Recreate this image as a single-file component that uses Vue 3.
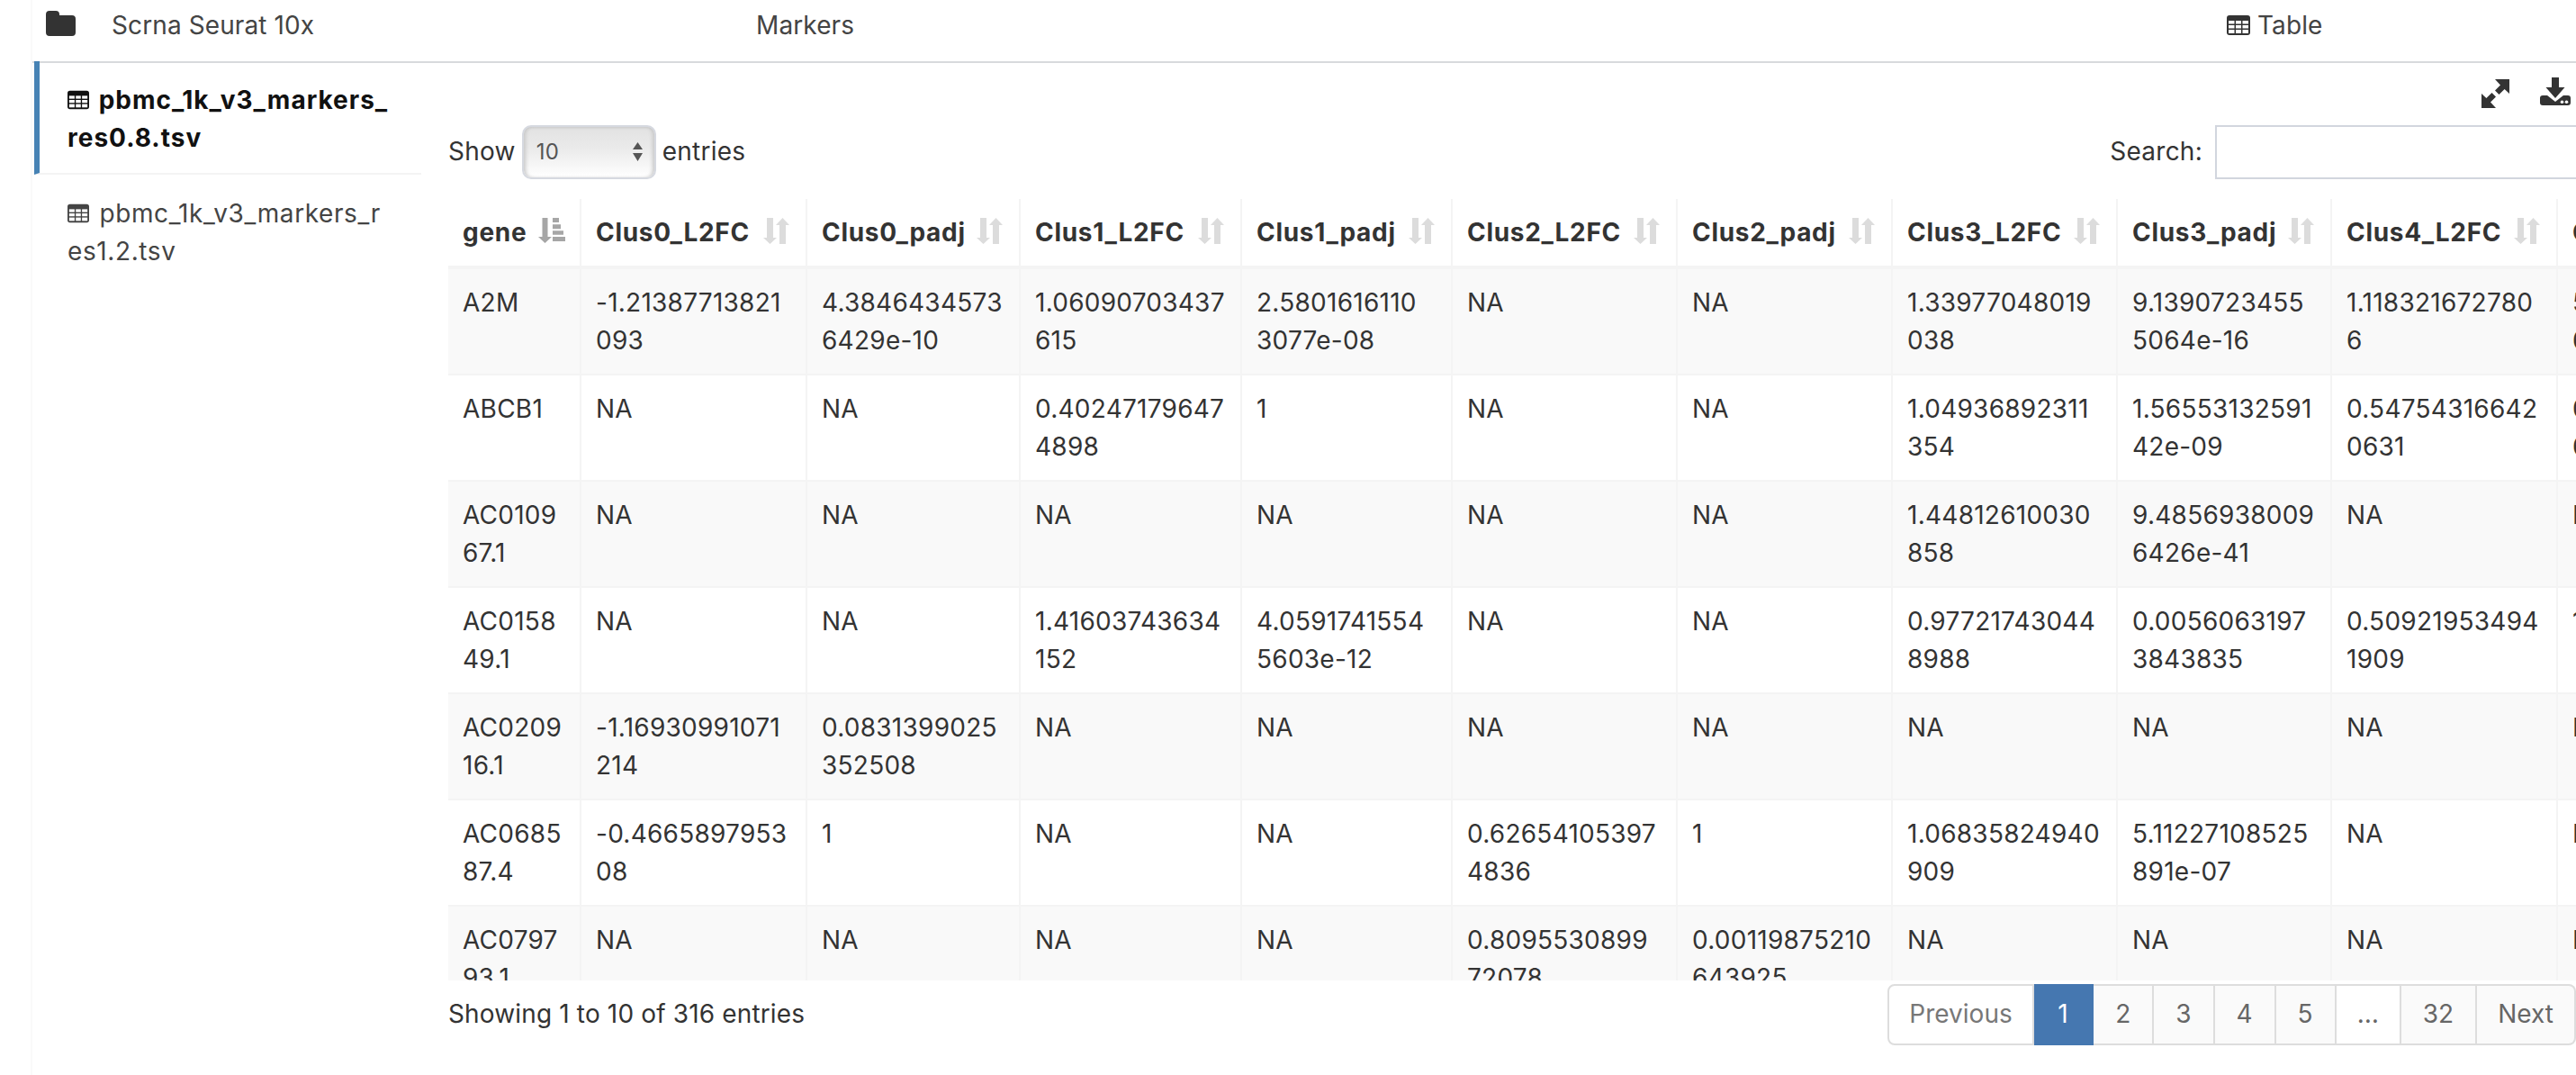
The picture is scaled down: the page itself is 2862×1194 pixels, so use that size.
<script setup>
const headers = ['gene','Clus0_L2FC','Clus0_padj','Clus1_L2FC','Clus1_padj','Clus2_L2FC','Clus2_padj','Clus3_L2FC','Clus3_padj','Clus4_L2FC','Clus4_padj']
const widths = [146,251,237,246,234,250,239,250,238,251,240]
const rows = [
  ['A2M','-1.21387713821093','4.38464345736429e-10','1.06090703437615','2.58016161103077e-08','NA','NA','1.33977048019038','9.13907234555064e-16','1.1183216727806','5.21387713866604'],
  ['ABCB1','NA','NA','0.402471796474898','1','NA','NA','1.04936892311354','1.5655313259142e-09','0.547543166420631','0.01377138211163'],
  ['AC010967.1','NA','NA','NA','NA','NA','NA','1.44812610030858','9.48569380096426e-41','NA','NA'],
  ['AC015849.1','NA','NA','1.41603743634152','4.05917415545603e-12','NA','NA','0.977217430448988','0.00560631973843835','0.509219534941909','1'],
  ['AC020916.1','-1.16930991071214','0.0831399025352508','NA','NA','NA','NA','NA','NA','NA','NA'],
  ['AC068587.4','-0.466589795308','1','NA','NA','0.626541053974836','1','1.06835824940909','5.11227108525891e-07','NA','NA'],
  ['AC079793.1','NA','NA','NA','NA','0.809553089972078','0.00119875210643925','NA','NA','NA','NA'],
]
const pages = [
  { t: 'Previous', c: 'muted' }, { t: '1', c: 'active' }, { t: '2', c: 'tint' }, { t: '3', c: 'tint' },
  { t: '4', c: 'tint' }, { t: '5', c: 'tint' }, { t: '…', c: 'gap' }, { t: '32', c: 'tint' }, { t: 'Next', c: 'tint last' },
]
</script>

<template>
  <div class="page">
    <nav class="nav">
      <div class="nav-item">
        <svg class="folder" viewBox="0 0 33 28"><path d="M4 0h7q4 0 4 4v1h14q4 0 4 4v15q0 4-4 4H4q-4 0-4-4V4q0-4 4-4z" fill="#333"/></svg>
        <span>Scrna Seurat 10x</span>
      </div>
      <div class="nav-item"><span>Markers</span></div>
      <div class="nav-item nav-table">
        <svg class="nav-ic" viewBox="0 0 26 22">
          <rect width="26" height="22" rx="3" fill="#333"/>
          <g fill="#fff">
            <rect x="2" y="6" width="6.5" height="3.5"/><rect x="10" y="6" width="6" height="3.5"/><rect x="17.5" y="6" width="6.5" height="3.5"/>
            <rect x="2" y="11" width="6.5" height="3.5"/><rect x="10" y="11" width="6" height="3.5"/><rect x="17.5" y="11" width="6.5" height="3.5"/>
            <rect x="2" y="16" width="6.5" height="4"/><rect x="10" y="16" width="6" height="4"/><rect x="17.5" y="16" width="6.5" height="4"/>
          </g>
        </svg>
        <span>Table</span>
      </div>
    </nav>

    <div class="body">
      <aside class="side">
        <a class="file on">
          <svg class="tbl" viewBox="0 0 26 22">
            <rect width="26" height="22" rx="3" fill="#111"/>
            <g fill="#fff">
              <rect x="2" y="6" width="6.5" height="3.5"/><rect x="10" y="6" width="6" height="3.5"/><rect x="17.5" y="6" width="6.5" height="3.5"/>
              <rect x="2" y="11" width="6.5" height="3.5"/><rect x="10" y="11" width="6" height="3.5"/><rect x="17.5" y="11" width="6.5" height="3.5"/>
              <rect x="2" y="16" width="6.5" height="4"/><rect x="10" y="16" width="6" height="4"/><rect x="17.5" y="16" width="6.5" height="4"/>
            </g>
          </svg>
          pbmc_1k_v3_markers_res0.8.tsv
        </a>
        <a class="file">
          <svg class="tbl" viewBox="0 0 26 22">
            <rect width="26" height="22" rx="3" fill="#444"/>
            <g fill="#fff">
              <rect x="2" y="6" width="6.5" height="3.5"/><rect x="10" y="6" width="6" height="3.5"/><rect x="17.5" y="6" width="6.5" height="3.5"/>
              <rect x="2" y="11" width="6.5" height="3.5"/><rect x="10" y="11" width="6" height="3.5"/><rect x="17.5" y="11" width="6.5" height="3.5"/>
              <rect x="2" y="16" width="6.5" height="4"/><rect x="10" y="16" width="6" height="4"/><rect x="17.5" y="16" width="6.5" height="4"/>
            </g>
          </svg>
          pbmc_1k_v3_markers_res1.2.tsv
        </a>
      </aside>

      <main class="main">
        <div class="tools">
          <svg class="ic-exp" viewBox="0 0 31 32" fill="#333">
            <path d="M15 0H31V16L25.6 11 19.5 17 15 12.6 21 6.5z"/>
            <path d="M0 16 5.4 21 11.5 15 16 19.4 10 25.5 16 32H0z"/>
          </svg>
          <svg class="ic-dl" viewBox="0 0 34 31">
            <path d="M3 20h28q3 0 3 3v5q0 3-3 3H3q-3 0-3-3v-5q0-3 3-3z" fill="#333"/>
            <path d="M3 16 17 27 31 16z" fill="#fff"/>
            <path d="M13 0h8v11h6.500L17 23 6.500 11H13z" fill="#333"/>
            <circle cx="24.500" cy="27.300" r="1.800" fill="#fff"/>
            <circle cx="29.500" cy="27.300" r="1.800" fill="#fff"/>
          </svg>
        </div>

        <div class="controls">
          <label class="ctl">
            Show
            <span class="sel">
              <span class="sel-val">10</span>
              <svg class="sel-arrows" viewBox="0 0 11 21" fill="#555"><path d="M5.500 0 11 8H0zM5.500 21 0 12H11z"/></svg>
            </span>
            entries
          </label>
          <label class="ctl ctl-search">
            Search:
            <input class="search" type="search" />
          </label>
        </div>

        <div class="scroll">
          <table class="grid">
            <colgroup><col v-for="(w, i) in widths" :key="i" :style="{ width: w + 'px' }" /></colgroup>
            <thead>
              <tr>
                <th v-for="(h, i) in headers" :key="h">
                  {{ h }}
                  <svg v-if="i === 0" class="sort" viewBox="0 0 30 28" fill="#a6a6a6">
                    <path d="M4.500 0h6v21H15L7.500 28 0 21h4.500z"/>
                    <path d="M16 0h7v5h-7zM16 7.300h9v5h-9zM16 14.300h12v4.500H16zM16 21h14v5H16z"/>
                  </svg>
                  <svg v-else class="sort" viewBox="0 0 29 29" fill="#dcdcdc">
                    <path d="M4 0h7v22h4L7.500 29 0 22h4z"/>
                    <path d="M21.500 0 29 8h-4v21h-7V8h-4z"/>
                  </svg>
                </th>
              </tr>
            </thead>
            <tbody>
              <tr v-for="r in rows" :key="r[0]">
                <td v-for="(c, j) in r" :key="j">{{ c }}</td>
              </tr>
            </tbody>
          </table>
        </div>

        <div class="foot">
          <div class="info">Showing 1 to 10 of 316 entries</div>
          <div class="pager">
            <a v-for="p in pages" :key="p.t" :class="p.c">{{ p.t }}</a>
          </div>
        </div>
      </main>
    </div>
  </div>
</template>

<style scoped>
.page {
  width: 2826px;
  height: 1194px;
  margin-left: 34px;
  border-left: 2px solid #fafafa;
  overflow: hidden;
  font-family: Inter, "Liberation Sans", sans-serif;
  font-size: 28px;
  line-height: 42px;
  letter-spacing: 0.25px;
  color: #333;
  background: #fff;
}
.nav {
  height: 68px;
  box-sizing: content-box;
  border-bottom: 2px solid #d8dadd;
  display: grid;
  grid-template-columns: 789px 1634px 1fr;
  padding-left: 15px;
  color: #444;
  letter-spacing: 0.1px;
}
.nav-item { display: flex; align-items: center; height: 56px; }
.folder { width: 33px; height: 28px; margin-right: 40px; flex: none; margin-top: -4px; }
.nav-ic { width: 26px; height: 22px; margin-right: 8px; flex: none; }
.body { display: flex; margin-top: -2px; }
.side { width: 430px; margin-left: 2px; flex: none; }
.file {
  display: block;
  padding: 22px 32px 18px 37px;
  border-bottom: 2px solid #f4f4f4;
  word-break: break-all;
  color: #444;
  letter-spacing: 0.6px;
}
.file:last-child { border-bottom: 0; }
.file.on {
  font-weight: 700;
  color: #111;
  padding-left: 31px;
  padding-right: 28px;
  border-left: 6px solid #4682b4;
  letter-spacing: 1px;
}
.tbl { width: 24px; height: 22px; margin-right: 3px; vertical-align: -1px; }
.main { width: 2364px; margin-left: 30px; flex: none; margin-top: 2px; }
.tools {
  height: 69px;
  display: flex;
  justify-content: flex-end;
  padding-top: 16px;
  box-sizing: border-box;
}
.ic-exp { width: 31px; height: 32px; margin-top: 2px; margin-right: 34px; }
.ic-dl { width: 34px; height: 31px; margin-right: 6px; }
.controls {
  height: 60px;
  display: flex;
  justify-content: space-between;
  margin-right: -4px;
  margin-bottom: 22px;
}
.ctl { display: flex; align-items: center; gap: 7px; height: 58px; }
.ctl-search { gap: 14px; }
.sel {
  position: relative;
  display: block;
  width: 149px;
  height: 60px;
  margin-top: 2px;
  box-sizing: border-box;
  border: 2px solid #d6d9e0;
  border-radius: 10px;
  background: linear-gradient(#e2e2e2, #ebebeb 45%, #fff);
  box-shadow: inset 4px 0 4px -2px #c8c8c8, inset -4px 0 4px -2px #c8c8c8, inset 0 3px 3px -2px #ccc;
  color: #555;
  font-size: 24px;
  padding-left: 14px;
  line-height: 56px;
}
.sel-arrows { position: absolute; right: 13px; top: 17px; width: 11px; height: 21px; }
.search {
  width: 405px;
  height: 60px;
  margin-top: 2px;
  box-sizing: border-box;
  border: 2px solid #d2d6de;
  padding: 0;
  background: #fff;
  appearance: none;
  border-radius: 0;
  outline: none;
}
.scroll { height: 868px; overflow: hidden; }
.grid {
  table-layout: fixed;
  width: 2582px;
  border-collapse: separate;
  border-spacing: 0;
}
th, td {
  padding: 16px;
  text-align: left;
  vertical-align: top;
  word-break: break-all;
  border-left: 2px solid #f4f4f4;
}
th:first-child, td:first-child { border-left: 0; }
th {
  position: relative;
  font-weight: 700;
  letter-spacing: 0.7px;
  white-space: nowrap;
  border-bottom: 4px solid #f4f4f4;
  overflow: hidden;
}
td { border-top: 2px solid #f4f4f4; }
td:nth-child(5) { padding-right: 24px; }
tbody tr:first-child td { border-top: 0; }
tbody tr:nth-child(odd) td { background: #f9f9f9; }
.sort { position: absolute; top: 21px; right: 18px; width: 29px; height: 29px; }
th:first-child .sort { right: 16px; width: 30px; height: 28px; }
.foot { display: flex; justify-content: space-between; margin-top: 4px; }
.info { line-height: 66px; letter-spacing: 0.15px; }
.pager { display: flex; height: 68px; letter-spacing: 0; }
.pager a {
  display: block;
  padding: 0 24px;
  border: 2px solid #ddd;
  border-left-width: 0;
  line-height: 62px;
  color: #666;
  background: #fff;
}
.pager a:first-child { border-left-width: 2px; border-radius: 8px 0 0 8px; padding: 0 22px; }
.pager a:last-child { border-radius: 0 8px 8px 0; padding: 0 23px; }
.pager .muted { color: #777; }
.pager .tint { background: #fafafa; }
.pager .gap { padding: 0 23px; }
.pager .active { background: #4577b0; border-color: #4577b0; color: #fff; padding: 0 26.5px; }
</style>

<style>
html, body { margin: 0; overflow: hidden; background: #fff; }
</style>
